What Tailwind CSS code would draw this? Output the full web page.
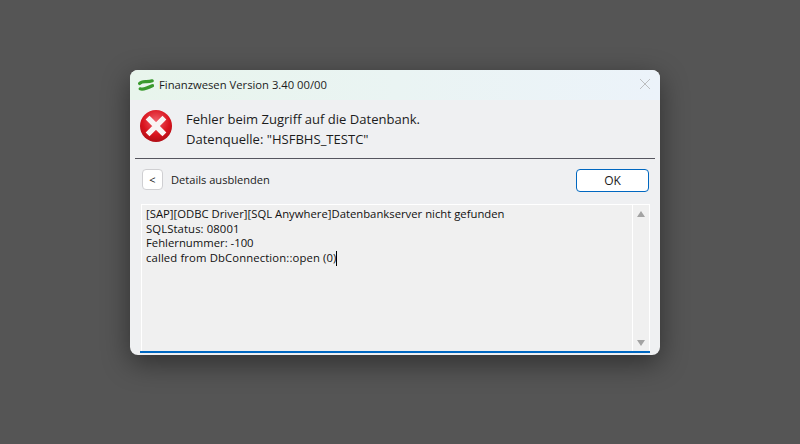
<!DOCTYPE html>
<html lang="de">
  <head>
    <meta charset="utf-8" />
    <script src="https://cdn.jsdelivr.net/npm/@tailwindcss/browser@4"></script>
    <title>Finanzwesen</title>
  </head>
  <body class="w-[800px] h-[444px] overflow-hidden bg-[#555555] pt-[70px] pl-[130px] font-['Open_Sans','Noto_Sans',sans-serif] text-[#1a1a1a]">
    <div class="w-[530px] h-[285px] rounded-lg overflow-hidden bg-[#eff0f2] flex flex-col shadow-[0_8px_28px_rgba(0,0,0,0.45)]">
      <!-- title bar -->
      <div class="h-[30px] shrink-0 flex items-center pl-[8px] pr-[10px] bg-gradient-to-r from-[#e8f5ec] to-[#ecf3fa]">
        <svg width="16" height="12" viewBox="0 0 16 12" class="shrink-0">
          <path d="M1.6 4.6 C4.5 1 9 4 14.2 1.8" fill="none" stroke="#3a9a2e" stroke-width="3.2" stroke-linecap="round" />
          <path d="M2.2 9.8 C6 11 11 8.4 14.6 6.6" fill="none" stroke="#3a9a2e" stroke-width="3.2" stroke-linecap="round" />
        </svg>
        <span class="ml-[5px] text-[11.25px] text-[#1c1c1c]">Finanzwesen Version 3.40 00/00</span>
        <svg width="10" height="10" viewBox="0 0 10 10" class="ml-auto mb-[2px]">
          <path d="M0 0 L10 10 M10 0 L0 10" stroke="#bcbec0" stroke-width="1" />
        </svg>
      </div>

      <!-- message -->
      <div class="h-[58px] shrink-0 flex items-start pl-[10px] pt-[9px]">
        <svg width="32" height="32" viewBox="0 0 32 32" class="shrink-0 mt-[1px]">
          <defs>
            <radialGradient id="red" cx="50%" cy="35%" r="70%">
              <stop offset="0%" stop-color="#f0606a" />
              <stop offset="60%" stop-color="#d9141e" />
              <stop offset="100%" stop-color="#a80c14" />
            </radialGradient>
          </defs>
          <circle cx="16" cy="16" r="16" fill="url(#red)" />
          <path d="M9.5 9.5 L22.5 22.5 M22.5 9.5 L9.5 22.5" stroke="#f8f4f4" stroke-width="5.4" stroke-linecap="square" />
        </svg>
        <div class="ml-[14px] text-[13.05px] leading-[20px] text-[#1c1c1c]">
          <div>Fehler beim Zugriff auf die Datenbank.</div>
          <div>Datenquelle: "HSFBHS_TESTC"</div>
        </div>
      </div>

      <div class="h-px shrink-0 mx-[5px] bg-[#55555f]"></div>

      <!-- details row -->
      <div class="h-[45px] shrink-0 flex items-start pt-[10px] pl-[12px] pr-[11px]">
        <div class="w-[21px] h-[21px] flex items-center justify-center rounded-[4px] border border-[#cfcfd2] bg-white text-[11px] leading-none">&lt;</div>
        <span class="ml-[8px] mt-[2px] text-[11.1px] leading-[17px]">Details ausblenden</span>
        <button class="ml-auto w-[73px] h-[23px] rounded-[4px] border border-[#0067c0] bg-white text-[12px] leading-none">OK</button>
      </div>

      <!-- details text -->
      <div class="flex-1 min-h-0 flex ml-[10px] bg-[#f0f0f0] mr-[10px] border-b-2 border-b-[#0067c0]">
        <div class="flex-1 flex ml-px border-x border-t border-white">
          <div class="flex-1 pl-[4px] pt-[2px] text-[11.3px] leading-[14.67px] text-[#111111]">
            <div>[SAP][ODBC Driver][SQL Anywhere]Datenbankserver nicht gefunden</div>
            <div class="tracking-[0.1px]">SQLStatus: 08001</div>
            <div>Fehlernummer: -100</div>
            <div class="flex items-center tracking-[0.12px]">called from DbConnection::open (0)<span class="inline-block w-px h-[15px] bg-black"></span></div>
          </div>
          <div class="w-[17px] border-l border-white flex flex-col items-center justify-between pt-[6px] pb-[5px]">
            <div class="w-0 h-0 border-x-4 border-x-transparent border-b-[6px] border-b-[#a3a3a3]"></div>
            <div class="w-0 h-0 border-x-4 border-x-transparent border-t-[6px] border-t-[#a3a3a3]"></div>
          </div>
        </div>
      </div>
      <div class="h-[2px] shrink-0"></div>
    </div>
  </body>
</html>
